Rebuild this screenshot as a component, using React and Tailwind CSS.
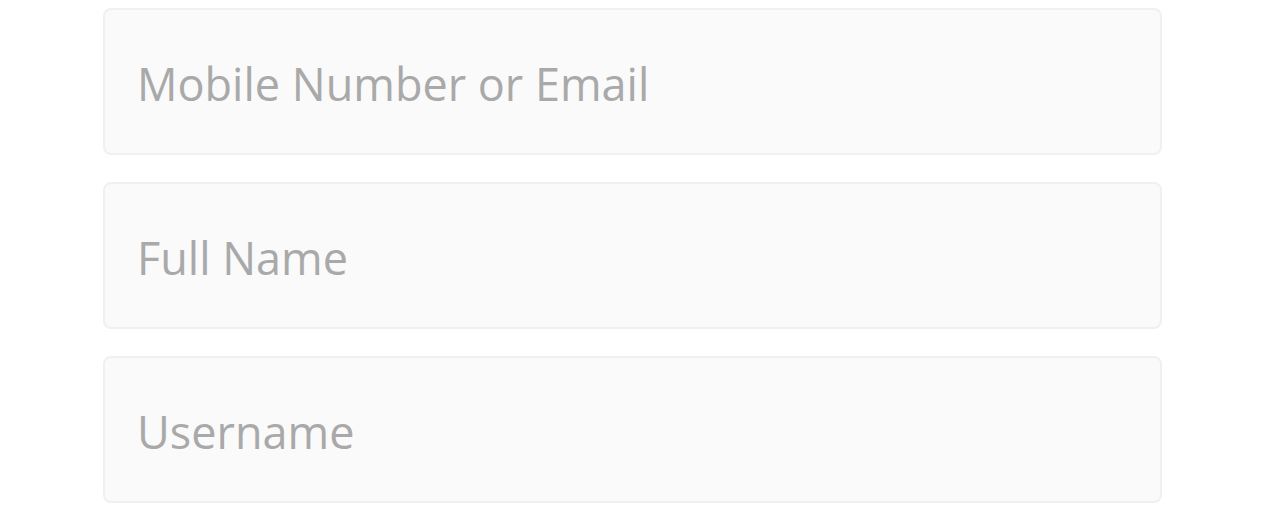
export default function App() {
  const fields = ["Mobile Number or Email", "Full Name", "Username"];
  return (
    <div className="w-[1280px] h-[527px] bg-white overflow-hidden pt-[8px] pl-[103px] font-['Open_Sans','Noto_Sans',sans-serif]">
      <div className="flex flex-col gap-[27px] w-[1059px]">
        {fields.map((f) => (
          <input
            key={f}
            readOnly
            placeholder={f}
            className="block w-full h-[147px] rounded-[8px] border-2 border-[#f0f0f0] bg-[#fafafa] pl-[32px] pt-[4px] text-[45px] font-['Open_Sans','Noto_Sans',sans-serif] text-[#a9a9a9] placeholder:text-[#a9a9a9] outline-none"
          />
        ))}
      </div>
    </div>
  );
}
